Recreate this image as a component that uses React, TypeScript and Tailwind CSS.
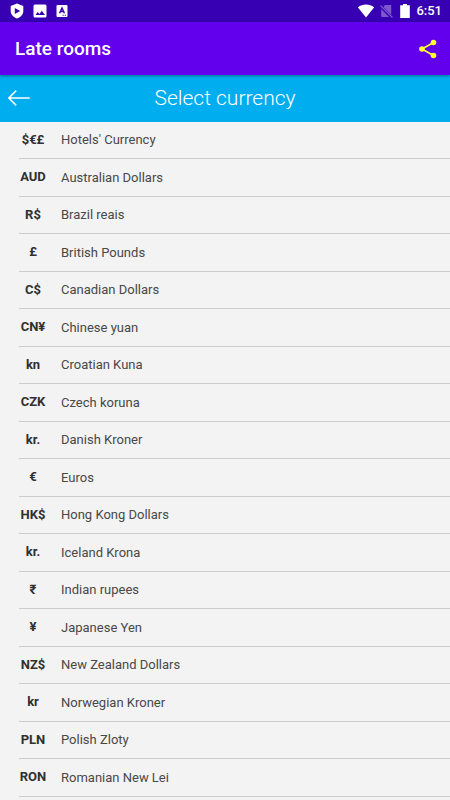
const currencies = [
  { code: "$€£", name: "Hotels' Currency" },
  { code: "AUD", name: "Australian Dollars" },
  { code: "R$", name: "Brazil reais" },
  { code: "£", name: "British Pounds" },
  { code: "C$", name: "Canadian Dollars" },
  { code: "CN¥", name: "Chinese yuan" },
  { code: "kn", name: "Croatian Kuna" },
  { code: "CZK", name: "Czech koruna" },
  { code: "kr.", name: "Danish Kroner" },
  { code: "€", name: "Euros" },
  { code: "HK$", name: "Hong Kong Dollars" },
  { code: "kr.", name: "Iceland Krona" },
  { code: "₹", name: "Indian rupees" },
  { code: "¥", name: "Japanese Yen" },
  { code: "NZ$", name: "New Zealand Dollars" },
  { code: "kr", name: "Norwegian Kroner" },
  { code: "PLN", name: "Polish Zloty" },
  { code: "RON", name: "Romanian New Lei" },
];

function StatusBar() {
  return (
    <div className="flex h-[22px] items-center justify-between bg-[#3700b3] pr-2 pl-[10px] text-white">
      <div className="flex items-center gap-[9px]">
        <svg className="h-4 w-[14px]" viewBox="0 0 14 16" aria-hidden="true">
          <path fill="currentColor" d="M7 .5 13.3 3v5c0 3.5-2.5 6.3-6.3 7.5C3.2 14.3.7 11.5.7 8V3Z" />
          <path fill="#3700b3" d="M4.800 5v6l5.400-3Z" />
        </svg>
        <svg className="h-[14px] w-[14px]" viewBox="0 0 14 14" aria-hidden="true">
          <rect x=".5" y=".5" width="13" height="13" rx="1.5" fill="currentColor" />
          <path fill="#3700b3" d="m2.500 11 2.200-3 1.700 2 2.400-3.200L12 11Z" />
        </svg>
        <svg className="h-[14px] w-[12px]" viewBox="0 0 12 14" aria-hidden="true">
          <rect x=".5" y="1" width="11" height="12" rx="1" fill="currentColor" />
          <path fill="none" stroke="#3700b3" strokeWidth="1.5" d="M3.600 9.200 6 4l2.400 5.200M4.400 7.600h3.200" />
          <path fill="#3700b3" d="M6.500 10.800h1.200v1H6.500Zm2.200 0h1.200v1H8.700Z" />
        </svg>
      </div>
      <div className="flex items-center">
        <svg className="h-[14px] w-4" viewBox="0 0 16 14" aria-hidden="true">
          <path fill="currentColor" d="M8 13.500-.2 3.300C2 1.600 4.900.5 8 .5s6 1.100 8.200 2.800Z" />
        </svg>
        <svg className="ml-[6px] h-[14px] w-[13px] opacity-35" viewBox="0 0 13 14" aria-hidden="true">
          <path fill="currentColor" d="M5 1h6.200v9.700L3.500 3ZM1.200 5l7.800 8H2.200a1 1 0 0 1-1-1Z" />
          <path fill="none" stroke="currentColor" strokeWidth="1.2" d="m.5 1.500 12 12" />
        </svg>
        <svg className="ml-[7px] h-[14px] w-[10px]" viewBox="0 0 10 14" aria-hidden="true">
          <path fill="currentColor" d="M3 0h4v1.300h2.800V14H.2V1.300H3Z" />
        </svg>
        <span className="ml-[6px] text-[13px] leading-4 font-medium">6:51</span>
      </div>
    </div>
  );
}

export default function App() {
  return (
    <div className="min-h-screen bg-[#f3f3f3] font-['Roboto',sans-serif]">
      <StatusBar />
      <header className="relative flex h-[53px] items-center justify-between bg-[#6200ee] pr-3 pl-[15px] shadow-[0_1px_3px_rgba(0,0,0,0.4)]">
        <h1 className="text-[19px] leading-6 font-medium text-white">Late rooms</h1>
        <button type="button" aria-label="Share" className="text-[#ffff2e]">
          <svg className="h-5 w-5" viewBox="0 0 20 20" aria-hidden="true">
            <path fill="none" stroke="currentColor" strokeWidth="1.7" d="m15.500 3.500-11.500 6.500 11.500 6.500" />
            <circle cx="15.5" cy="3.5" r="2.8" fill="currentColor" />
            <circle cx="4" cy="10" r="2.8" fill="currentColor" />
            <circle cx="15.5" cy="16.5" r="2.8" fill="currentColor" />
          </svg>
        </button>
      </header>
      <div className="grid h-[47px] grid-cols-[1fr_auto_1fr] items-center bg-[#00adef] px-2 pb-[2px] text-white">
        <button type="button" aria-label="Back" className="justify-self-start">
          <svg className="h-4 w-[22px]" viewBox="0 0 22 16" aria-hidden="true">
            <path fill="none" stroke="currentColor" strokeWidth="1.5" d="M21.700 8H.9M8.200.600.900 8l7.300 7.400" />
          </svg>
        </button>
        <h2 className="text-[21px] leading-6 font-light">Select currency</h2>
      </div>
      <ul className="pl-[19px]">
        {currencies.map(({ code, name }) => (
          <li key={name} className="border-b border-[#cccccc] odd:h-[37px] even:h-[38px]">
            <button type="button" className="flex h-full w-full items-center gap-[14px] text-left text-[13px] leading-4">
              <span className="flex w-7 justify-center pb-px font-bold text-[#303030]">{code}</span>
              <span className="text-[#484848]">{name}</span>
            </button>
          </li>
        ))}
      </ul>
    </div>
  );
}
